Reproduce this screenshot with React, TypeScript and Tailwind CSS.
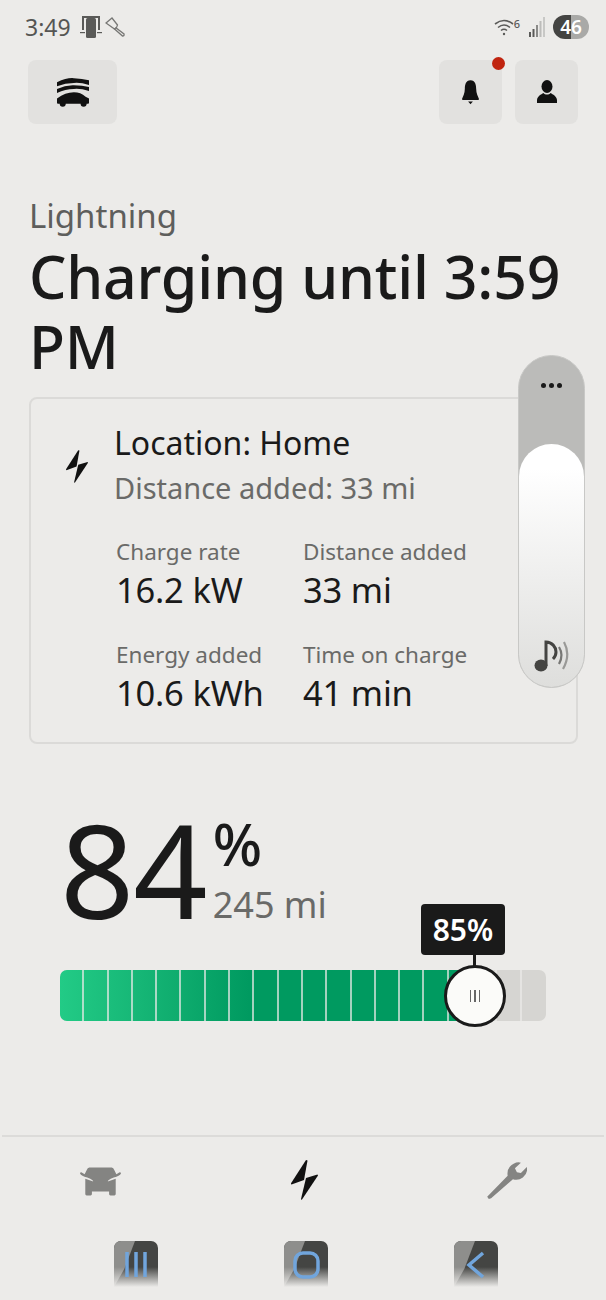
const Bolt = ({ className }: { className: string }) => (
  <svg viewBox="0 0 27 40" className={className} fill="currentColor">
    <path d="M15 0 L16.500 0.500 L13 20 L0.500 24.500 Q-0.300 24 0.200 23 Z" />
    <path d="M26.500 14.500 L27 15.500 L11 39.500 Q10 40.300 10 39 L15 18 Z" />
  </svg>
);

const Stat = ({ label, value }: { label: string; value: string }) => (
  <div className="flex flex-col">
    <div className="text-[22.5px] leading-[28px] text-[#6a6a68]">{label}</div>
    <div className="text-[34.5px] leading-[48px] text-[#1a1a1a] tracking-[-0.2px]">{value}</div>
  </div>
);

const SoftKey = ({ children }: { children: React.ReactNode }) => (
  <div className="relative w-[44px] h-[46px] rounded-t-[7px] overflow-hidden bg-[#444543]">
    <div className="absolute left-0 top-0 w-[21px] h-[46px] bg-[#8e8e8c] [clip-path:polygon(0_0,100%_0,50%_60%,0_100%)]"></div>
    <div className="absolute left-0 right-0 bottom-0 h-[20px] bg-gradient-to-b from-transparent to-[#ecebe9]"></div>
    <svg viewBox="0 0 44 46" className="absolute inset-0 w-full h-full" fill="none" stroke="#71a5dc" strokeWidth="3.500">
      {children}
    </svg>
  </div>
);

const App = () => {
  return (
    <div
      className="relative w-[606px] h-[1300px] overflow-hidden bg-[#ecebe9] text-[#1a1a1a]"
      style={{ fontFamily: '"Noto Sans", sans-serif' }}
    >
      {/* status bar */}
      <div className="flex items-center justify-between h-[54px] pl-[25px] pr-[17px]">
        <div className="flex items-center gap-[9px]">
          <span className="text-[23px] text-[#555553]">3:49</span>
          <svg viewBox="0 0 22 22" className="w-[22px] h-[22px] text-[#5a5a58]" fill="currentColor">
            <path d="M2 0h18v14h-2V2H4v12H2z" />
            <rect x="6" y="2" width="10" height="20" rx="1.500" />
            <rect x="0" y="16" width="5" height="1.200" />
            <rect x="17" y="16" width="5" height="1.200" />
          </svg>
          <svg viewBox="0 0 20 20" className="w-[20px] h-[20px] -ml-[6px] text-[#777775]" fill="none" stroke="currentColor" strokeWidth="1.300">
            <path d="M1 6 L7 1 L12.500 8 Q12 11 9.500 12 Z" />
            <path d="M10.500 10.500 L19 17 Q19.500 19 17.500 19 L9 11.500" />
          </svg>
        </div>
        <div className="flex items-center">
          <svg viewBox="0 0 20 20" className="w-[20px] h-[20px] text-[#5a5a58]" fill="none" stroke="currentColor" strokeWidth="1.600">
            <path d="M1 7 Q10 0 19 7" />
            <path d="M4 10.500 Q10 5.500 16 10.500" />
            <path d="M7 13.500 Q10 11 13 13.500" />
            <circle cx="10" cy="17" r="1.200" fill="currentColor" stroke="none" />
          </svg>
          <span className="text-[11px] leading-none font-medium text-[#5a5a58] -mt-[8px]">6</span>
          <svg viewBox="0 0 17 20" className="ml-[9px] w-[17px] h-[20px]">
            <rect x="0" y="15" width="2" height="5" fill="#5a5a58" />
            <rect x="3.500" y="12" width="2" height="8" fill="#5a5a58" />
            <rect x="7" y="8" width="2" height="12" fill="#8a8a88" />
            <rect x="10.500" y="4" width="2" height="16" fill="#bcbcba" />
            <rect x="14" y="0" width="2" height="20" fill="#c8c8c6" />
          </svg>
          <div className="ml-[7px] w-[36px] h-[24px] rounded-full overflow-hidden flex items-center justify-center text-white text-[19px] font-semibold bg-gradient-to-r from-[#444442] from-50% to-[#a9a9a7] to-50%">
            46
          </div>
        </div>
      </div>

      {/* header buttons */}
      <div className="flex items-center justify-between mt-[6px] pl-[28px] pr-[28px]">
        <div className="flex items-center justify-center w-[89px] h-[64px] rounded-[8px] bg-[#e2e1df]">
          <svg viewBox="0 0 95 85" className="w-[32px] h-[29px] text-[#111]" fill="currentColor">
            <path d="M0 12 Q30 -2 50 0 Q75 1 95 6 V20 Q70 12 50 14 Q25 14 0 24 Z" />
            <path d="M0 32 Q25 20 50 21 Q75 21 95 26 V38 Q70 30 50 32 Q25 32 0 44 Z" />
            <path d="M0 60 Q25 42 50 42 Q70 42 85 55 L95 60 V74 Q95 76 92 76 H88 A9 9 0 0 1 70 76 H26 A9 9 0 0 1 8 76 H3 Q0 76 0 74 Z" />
          </svg>
        </div>
        <div className="flex items-center gap-[13px]">
          <div className="relative flex items-center justify-center w-[63px] h-[64px] rounded-[8px] bg-[#e2e1df]">
            <svg viewBox="0 0 18 26" className="w-[17px] h-[25px] text-[#111]" fill="currentColor">
              <path d="M9 0 C14 0 15 5 15 9 C15 14 17 17 18 20 Q18 21 17 21 H1 Q0 21 0 20 C1 17 3 14 3 9 C3 5 4 0 9 0 Z" />
              <path d="M6.500 22.500 H11.500 L9 25.500 Z" />
            </svg>
            <div className="absolute -top-[3px] right-[-3px] w-[13px] h-[13px] rounded-full bg-[#c0240f]"></div>
          </div>
          <div className="flex items-center justify-center w-[63px] h-[64px] rounded-[8px] bg-[#e2e1df]">
            <svg viewBox="0 0 20 24" className="w-[20px] h-[24px] text-[#111]" fill="currentColor">
              <ellipse cx="10" cy="6.500" rx="5.500" ry="6.500" />
              <path d="M6.500 13 C8 15 12 15 13.500 13 C16 14.500 19.500 16 20 20 V23 H0 V20 C0.500 16 4 14.500 6.500 13 Z" />
            </svg>
          </div>
        </div>
      </div>

      {/* title */}
      <div className="mt-[70px] pl-[29px] text-[33px] leading-[44px] text-[#5e5e5c]">Lightning</div>
      <div className="mt-[3px] pl-[29px] pr-[30px] text-[59px] leading-[70px] font-medium tracking-[-0.2px] text-[#1a1a1a]">
        Charging until 3:59 PM
      </div>

      {/* details card */}
      <div className="flex mt-[16px] ml-[29px] w-[549px] h-[347px] rounded-[8px] border-2 border-[#dbdad8] pt-[22px]">
        <div className="w-[83px] flex justify-center pt-[29px] pl-[8px]">
          <Bolt className="w-[22px] h-[33px] text-[#111]" />
        </div>
        <div className="flex flex-col">
          <div className="text-[32px] leading-[44px] text-[#1a1a1a]">Location: Home</div>
          <div className="text-[29px] leading-[44px] text-[#6a6a68] mt-[1px]">Distance added: 33 mi</div>
          <div className="grid grid-cols-[187px_1fr] gap-y-[27px] mt-[28px] ml-[2px]">
            <Stat label="Charge rate" value="16.2 kW" />
            <Stat label="Distance added" value="33 mi" />
            <Stat label="Energy added" value="10.6 kWh" />
            <Stat label="Time on charge" value="41 min" />
          </div>
        </div>
      </div>

      {/* volume slider */}
      <div className="absolute left-[518px] top-[355px] w-[67px] h-[333px] rounded-full bg-[#bbbbb9] border border-[#c8c8c6]">
        <div className="flex justify-center gap-[3px] pt-[27px]">
          <div className="w-[5px] h-[5px] rounded-full bg-[#1a1a1a]"></div>
          <div className="w-[5px] h-[5px] rounded-full bg-[#1a1a1a]"></div>
          <div className="w-[5px] h-[5px] rounded-full bg-[#1a1a1a]"></div>
        </div>
        <div className="absolute left-0 right-0 bottom-0 h-[243px] rounded-full bg-gradient-to-b from-white from-10% to-[#dededc] flex items-end justify-center pb-[15px]">
          <svg viewBox="0 0 36 32" className="w-[36px] h-[32px]" fill="none">
            <ellipse cx="7" cy="25.500" rx="6.500" ry="6" fill="#444442" />
            <path d="M12 26 V2 C18 2 22 7 22 12 C22 15 21 17 19 19" stroke="#444442" strokeWidth="3" />
            <path d="M25 7 Q30 15 25 24" stroke="#777775" strokeWidth="2.200" />
            <path d="M30 2 Q37 15 29 29" stroke="#999997" strokeWidth="2.200" />
          </svg>
        </div>
      </div>

      {/* state of charge */}
      <div className="flex mt-[65px] ml-[60px] h-[120px]">
        <div className="text-[130px] leading-[120px] tracking-[-1px] text-[#1a1a1a]">84</div>
        <div className="flex flex-col ml-[6px] pt-[6px]">
          <div className="text-[58px] leading-[58px] font-medium text-[#1a1a1a]">%</div>
          <div className="text-[36px] leading-[50px] text-[#6a6a68] mt-[7px]">245 mi</div>
        </div>
      </div>

      {/* charge limit bar */}
      <div className="relative mt-[41px] ml-[60px] w-[486px] h-[51px] rounded-[7px] bg-[#d6d5d2]">
        <div className="absolute left-0 top-0 bottom-0 w-[420px] rounded-l-[7px] bg-gradient-to-r from-[#22cb86] via-[#009a60] via-45% to-[#009a60]"></div>
        <div className="absolute inset-0 grid grid-cols-20 overflow-hidden rounded-[7px]">
          {Array.from({ length: 20 }).map((_, i) => (
            <div key={i} className="border-r-2 border-[#ebeae8]/70 last:border-r-0"></div>
          ))}
        </div>
        <div className="absolute left-[361px] -top-[66px] flex flex-col items-start">
          <div className="w-[84px] h-[51px] rounded-[4px] bg-[#1a1a1a] flex items-center justify-center text-white text-[30px] font-semibold">
            85%
          </div>
          <div className="ml-[52px] w-[3px] h-[13px] bg-[#1a1a1a]"></div>
        </div>
        <div className="absolute left-[384px] -top-[5px] w-[62px] h-[62px] rounded-full bg-[#fbfbf9] border-[3px] border-[#1a1a1a] flex items-center justify-center gap-[3px]">
          <div className="w-[1.500px] h-[12px] bg-[#666]"></div>
          <div className="w-[1.500px] h-[12px] bg-[#666]"></div>
          <div className="w-[1.500px] h-[12px] bg-[#666]"></div>
        </div>
      </div>

      {/* bottom tabs */}
      <div className="mt-[114px] mx-[2px] border-t-2 border-[#dcdbd9] flex items-center justify-between h-[88px] pl-[78px] pr-[77px]">
        <svg viewBox="0 0 124 84" className="w-[41px] h-[29px] mt-[2px] text-[#848482]" fill="currentColor">
          <path d="M28 0 H96 Q101 1 104 8 L110 20 L120 14 Q124 14 124 18 Q120 26 102 30 Q92 33 86 38 L84 42 L108 34 V80 Q108 84 104 84 H92 Q88 84 88 80 V72 H36 V80 Q36 84 32 84 H20 Q16 84 16 80 V34 L40 42 L38 38 Q32 33 22 30 Q4 26 0 18 Q0 14 4 14 L14 20 L20 8 Q23 1 28 0 Z" />
        </svg>
        <Bolt className="w-[27px] h-[40px] text-[#111]" />
        <svg viewBox="0 0 120 115" className="w-[40px] h-[38px] text-[#848482]" fill="currentColor">
          <path d="M5 115 L0 108 L62 45 Q58 20 80 8 Q92 2 102 5 L84 22 L90 34 L102 36 L120 18 Q124 38 108 50 Q94 60 78 55 L12 113 Z" />
        </svg>
      </div>

      {/* android soft keys */}
      <div className="absolute left-[114px] right-[108px] top-[1241px] flex justify-between">
        <SoftKey>
          <path d="M13 11 V36 M22 11 V36 M31 11 V36" />
        </SoftKey>
        <SoftKey>
          <rect x="11" y="12" width="23" height="24" rx="8" />
        </SoftKey>
        <SoftKey>
          <path d="M29 12 L15 24 L29 36" />
        </SoftKey>
      </div>
    </div>
  );
};

export default App;
